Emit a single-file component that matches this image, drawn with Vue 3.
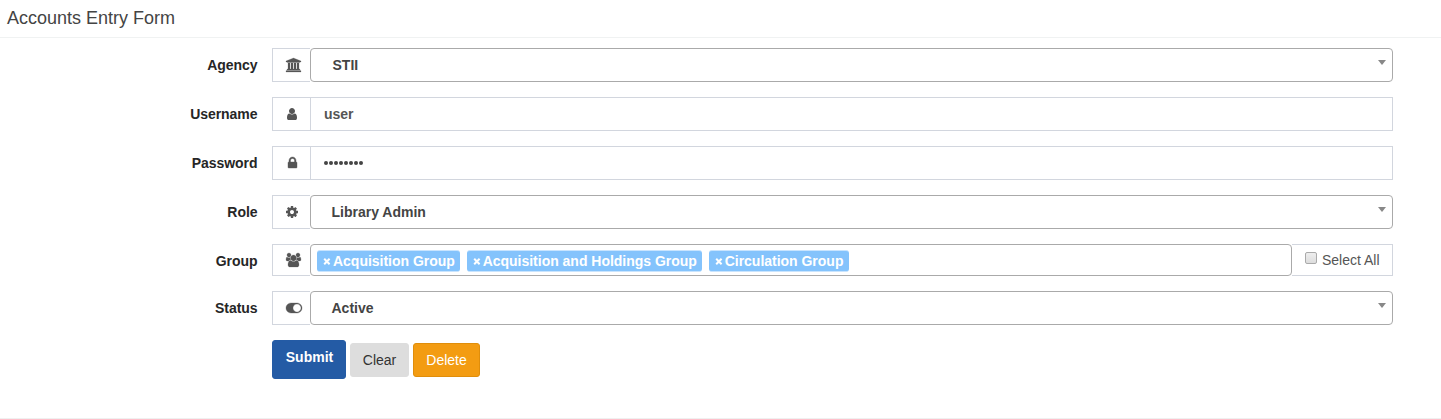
<script setup>
import { ref } from 'vue'

const icons = {
  bank: { w: 1920, d: 'M960 0l960 384v128h-128q0 26-20.5 45t-48.5 19h-1526q-28 0-48.5-19t-20.5-45h-128v-128zm-704 640h256v768h128v-768h256v768h128v-768h256v768h128v-768h256v768h59q28 0 48.5 19t20.5 45v64h-1664v-64q0-26 20.5-45t48.5-19h59v-768zm1595 960q28 0 48.5 19t20.5 45v128h-1920v-128q0-26 20.5-45t48.5-19h1782z' },
  user: { w: 1280, d: 'M1280 1399q0 109-62.5 187t-150.5 78h-854q-88 0-150.5-78t-62.5-187q0-85 8.5-160.5t31.5-152 58.5-131 94-89 134.5-34.5q131 128 313 128t313-128q76 0 134.5 34.5t94 89 58.5 131 31.5 152 8.5 160.5zm-256-887q0 159-112.5 271.5t-271.5 112.5-271.5-112.5-112.5-271.5 112.5-271.5 271.5-112.5 271.5 112.5 112.5 271.5z' },
  lock: { w: 1152, d: 'M320 768h512v-192q0-106-75-181t-181-75-181 75-75 181v192zm832 96v576q0 40-28 68t-68 28h-960q-40 0-68-28t-28-68v-576q0-40 28-68t68-28h32v-192q0-184 132-316t316-132 316 132 132 316v192h32q40 0 68 28t28 68z' },
  cog: { w: 1536, d: 'M1024 896q0-106-75-181t-181-75-181 75-75 181 75 181 181 75 181-75 75-181zm512-109v222q0 12-8 23t-20 13l-185 28q-19 54-39 91 35 50 107 138 10 12 10 25t-9 23q-27 37-99 108t-94 71q-12 0-26-9l-138-108q-44 23-91 38-16 136-29 186-7 28-36 28h-222q-14 0-24.5-8.5t-11.5-21.5l-28-184q-49-16-90-37l-141 107q-10 9-25 9-14 0-25-11-126-114-165-168-7-10-7-23 0-12 8-23 15-21 51-66.5t54-70.5q-27-50-41-99l-183-27q-13-2-21-12.5t-8-23.5v-222q0-12 8-23t19-13l186-28q14-46 39-92-40-57-107-138-10-12-10-24 0-10 9-23 26-36 98.5-107.5t94.5-71.5q13 0 26 10l138 107q44-23 91-38 16-136 29-186 7-28 36-28h222q14 0 24.5 8.5t11.5 21.5l28 184q49 16 90 37l142-107q9-9 24-9 13 0 25 10 129 119 165 170 7 8 7 22 0 12-8 23-15 21-51 66.5t-54 70.5q26 50 41 98l183 28q13 2 21 12.5t8 23.5z' },
  group: { w: 1920, d: 'M593 896q-162 5-265 128h-134q-82 0-138-40.5t-56-118.5q0-353 124-353 6 0 43.5 21t97.5 42.5 119 21.5q67 0 133-23-5 37-5 66 0 139 81 256zm1071 637q0 120-73 189.5t-194 69.5h-874q-121 0-194-69.5t-73-189.5q0-53 3.5-103.5t14-109 26.5-108.5 43-97.5 62-81 85.5-53.5 111.5-20q10 0 43 21.5t73 48 107 48 135 21.5 135-21.5 107-48 73-48 43-21.5q61 0 111.5 20t85.5 53.5 62 81 43 97.5 26.5 108.5 14 109 3.5 103.5zm-1024-1277q0 106-75 181t-181 75-181-75-75-181 75-181 181-75 181 75 75 181zm704 384q0 159-112.5 271.5t-271.5 112.5-271.5-112.5-112.5-271.5 112.5-271.5 271.5-112.5 271.5 112.5 112.5 271.5zm576 225q0 78-56 118.5t-138 40.5h-134q-103-123-265-128 81-117 81-256 0-29-5-66 66 23 133 23 59 0 119-21.5t97.5-42.5 43.5-21q124 0 124 353zm-128-609q0 106-75 181t-181 75-181-75-75-181 75-181 181-75 181 75 75 181z' },
  toggle: { w: 2048, d: 'M0 896q0-130 51-248.5t136.5-204 204-136.5 248.5-51h768q130 0 248.5 51t204 136.5 136.5 204 51 248.5-51 248.5-136.5 204-204 136.5-248.5 51h-768q-130 0-248.5-51t-204-136.5-136.5-204-51-248.5zm1408 512q104 0 198.5-40.5t163.5-109.5 109.5-163.5 40.5-198.5-40.5-198.5-109.5-163.5-163.5-109.5-198.5-40.5-198.5 40.5-163.5 109.5-109.5 163.5-40.5 198.5 40.5 198.5 109.5 163.5 163.5 109.5 198.5 40.5z' },
}

const rows = [
  { label: 'Agency', icon: 'bank', type: 'select', value: 'STII' },
  { label: 'Username', icon: 'user', type: 'text', value: 'user' },
  { label: 'Password', icon: 'lock', type: 'password', value: 'password' },
  { label: 'Role', icon: 'cog', type: 'select', value: 'Library Admin' },
  { label: 'Group', icon: 'group', type: 'tags', value: ['Acquisition Group', 'Acquisition and Holdings Group', 'Circulation Group'] },
  { label: 'Status', icon: 'toggle', type: 'select', value: 'Active' },
]
const selectAll = ref(false)
</script>

<template>
  <main class="page">
    <h1 class="title">Accounts Entry Form</h1>
    <form class="form" @submit.prevent>
      <div v-for="row in rows" :key="row.label" class="row" :class="`row-${row.type}`">
        <span class="label">{{ row.label }}</span>
        <div class="group">
          <span class="addon">
            <svg class="icon" :class="`icon-${row.icon}`" :width="icons[row.icon].w / 128" height="14" :viewBox="`0 0 ${icons[row.icon].w} 1792`"><path :d="icons[row.icon].d" /></svg>
          </span>
          <div v-if="row.type === 'select'" class="select" :class="{ indent: row.icon === 'bank' }">
            <span>{{ row.value }}</span><i class="caret"></i>
          </div>
          <div v-else-if="row.type === 'text'" class="input">{{ row.value }}</div>
          <div v-else-if="row.type === 'password'" class="input dots">
            <i v-for="n in row.value.length" :key="n" class="dot"></i>
          </div>
          <template v-else>
            <div class="tags">
              <span v-for="t in row.value" :key="t" class="tag"><svg class="remove" width="8" height="7" viewBox="0 0 8 7"><path d="M1.2 .8L6.6 6.2M6.6 .8L1.2 6.2" /></svg>{{ t }}</span>
            </div>
            <label class="all"><input v-model="selectAll" class="check" type="checkbox" /><span>Select All</span></label>
          </template>
        </div>
      </div>
      <div class="actions">
        <button class="btn submit">Submit</button>
        <button class="btn clear">Clear</button>
        <button class="btn delete">Delete</button>
      </div>
    </form>
  </main>
</template>

<style>
body { margin: 0; background: #fff; }
</style>

<style scoped>
.page { box-sizing: border-box; height: 419px; border-bottom: 1px solid #f0f0f0; font: 14px/20px "Liberation Sans", Arial, sans-serif; color: #333; overflow: hidden; }
.title { box-sizing: border-box; height: 38px; margin: 0; padding: 8px 7px 0; border-bottom: 1px solid #f0f2f2; font-size: 18px; font-weight: 400; line-height: 20px; color: #444; }
.form { padding: 10px 48px 0 0; }
.row { display: flex; height: 34px; margin-bottom: 15px; }
.row-tags { height: 32px; }
.label { width: 257.5px; margin-right: 14.5px; line-height: 34px; text-align: right; font-weight: 700; letter-spacing: -.05px; color: #262626; }
.group { display: flex; flex: 1; }
.addon { box-sizing: border-box; width: 38px; display: flex; align-items: center; justify-content: center; padding-left: 1px; border: 1px solid #d2d6de; border-right: 0; }
.icon { fill: #555; flex: none; overflow: visible; }
.icon-bank { margin-left: 2px; stroke: #555; stroke-width: 30; }
.icon-group { margin-left: 2px; stroke: #555; stroke-width: 30; }
.icon-lock { stroke: #555; stroke-width: 50; }
.icon-toggle { margin-left: 3px; stroke: #555; stroke-width: 40; }
.select, .tags { box-sizing: border-box; flex: 1; display: flex; border: 1px solid #aaa; border-radius: 4px; }
.select { justify-content: space-between; padding: 0 6px 0 20.5px; line-height: 32px; font-weight: 700; color: #444; }
.indent { padding-left: 21.5px; }
.caret { width: 0; height: 0; margin-top: 11px; border: 4px solid transparent; border-top: 5px solid #888; border-bottom: 0; }
.input { box-sizing: border-box; flex: 1; padding-left: 13px; border: 1px solid #d2d6de; line-height: 32px; font-weight: 700; color: #555; }
.dots { display: flex; align-items: center; gap: 1px; }
.dot { width: 4px; height: 4px; border-radius: 50%; background: #444; }
.tags { align-items: flex-start; gap: 6.3px; padding: 5px 6px; }
.tag { box-sizing: border-box; height: 22px; display: flex; align-items: center; padding: 0 5.5px 0 6px; border: solid #c8e4fe; border-width: 1px 0; border-radius: 3px; background: #84c3fc; color: #fff; font-weight: 700; line-height: 20px; letter-spacing: -.015px; white-space: nowrap; }
.remove { margin-right: 2px; fill: none; stroke: #fff; stroke-width: 2; }
.all { box-sizing: border-box; width: 101px; display: flex; padding-left: 13px; border: 1px solid #d2d6de; border-left: 0; line-height: 30px; color: #555; }
.check { appearance: none; box-sizing: border-box; width: 12px; height: 12px; margin: 7px 5px 0 0; border: 1px solid #aaa; border-radius: 2px; background: linear-gradient(#eee, #ddd); }
.actions { display: flex; align-items: center; gap: 4px; padding-left: 272px; }
.btn { box-sizing: border-box; height: 34px; margin: 0; padding: 0; border: 1px solid; border-radius: 3px; font: 14px/20px "Liberation Sans", Arial, sans-serif; }
.submit { width: 74px; height: 39px; padding: 0 0 5px 1px; border-color: #245ba5; background: #245ba5; color: #fff; font-weight: 700; }
.clear { width: 59px; border-color: #ddd; background: #ddd; color: #333; }
.delete { width: 67px; border-color: #e08e0b; background: #f39c12; color: #fff; }
</style>
